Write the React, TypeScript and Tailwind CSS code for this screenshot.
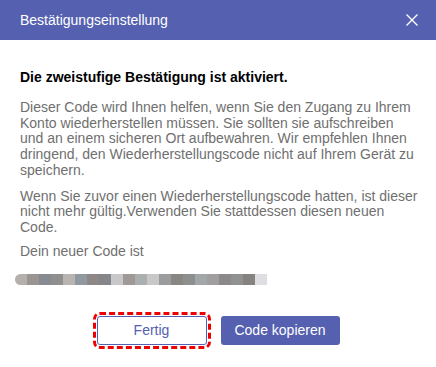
import React from "react";

const codeColors = [
  "#b5b0ac", "#9a9593", "#878a90", "#8f8f8f", "#b9b4af", "#9098a0", "#8d8886",
  "#86868a", "#c8c8ca", "#a09a97", "#aab0b0", "#c8c8c8", "#9a9c9e", "#8a8682",
  "#8e9090", "#a2a8aa", "#a09e9e", "#8c8a88", "#909292", "#858280", "#dcdee2",
];

export default function App() {
  return (
    <div
      className="w-[436px] h-[367px] bg-white flex flex-col overflow-hidden"
      style={{ fontFamily: '"Liberation Sans", Arial, sans-serif' }}
    >
      <div className="h-10 bg-[#5561b0] flex items-center justify-between pl-5 pr-[18px]">
        <span className="text-white text-[14px]">Bestätigungseinstellung</span>
        <svg width="12" height="12" viewBox="0 0 12 12">
          <path d="M0.5 0.5 L11.5 11.5 M11.5 0.5 L0.5 11.5" stroke="white" strokeWidth="1.4" fill="none" />
        </svg>
      </div>
      <div className="pl-5 pr-[16px] pt-[29px] flex flex-col">
        <div className="text-[14px] font-bold text-black leading-4">
          Die zweistufige Bestätigung ist aktiviert.
        </div>
        <p className="mt-[15px] text-[14px] text-[#6f6f6f] leading-[15.7px]">
          Dieser Code wird Ihnen helfen, wenn Sie den Zugang zu Ihrem Konto wiederherstellen müssen. Sie sollten sie aufschreiben und an einem sicheren Ort aufbewahren. Wir empfehlen Ihnen dringend, den Wiederherstellungscode nicht auf Ihrem Gerät zu speichern.
        </p>
        <p className="mt-[10px] text-[14px] text-[#6f6f6f] leading-[15.7px]">
          Wenn Sie zuvor einen Wiederherstellungscode hatten, ist dieser nicht mehr gültig.Verwenden Sie stattdessen diesen neuen Code.
        </p>
        <p className="mt-[8px] text-[14px] text-[#6f6f6f] leading-[15.7px]">Dein neuer Code ist</p>
        <div className="mt-[15px] flex h-[11px] ml-[-5px]">
          {codeColors.map((c, i) => (
            <div
              key={i}
              className={i === 0 ? "w-[12px] h-full rounded-l-full" : "w-[12px] h-full"}
              style={{ backgroundColor: c }}
            />
          ))}
        </div>
      </div>
      <div className="mt-[31px] flex justify-center gap-[14px]">
        <button className="w-[110px] h-[29px] rounded-[3px] border border-[#5561b0] text-[#5561b0] text-[14px] bg-white outline-[3px] outline-dashed outline-[#ee0000] outline-offset-[1px]">
          Fertig
        </button>
        <button className="w-[119px] h-[29px] rounded-[3px] bg-[#5561b0] text-white text-[14px]">
          Code kopieren
        </button>
      </div>
    </div>
  );
}
